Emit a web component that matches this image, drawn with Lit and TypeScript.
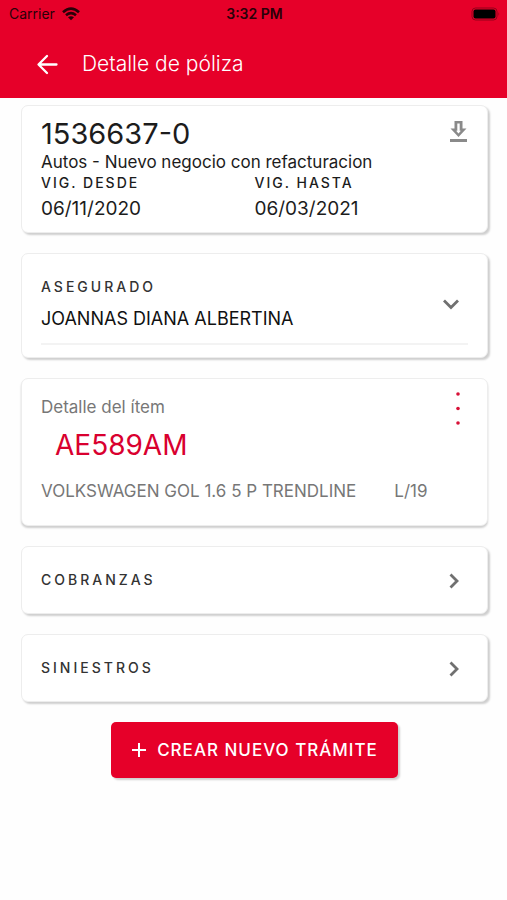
import { LitElement, html, css, svg } from "lit";
import { customElement } from "lit/decorators.js";

const chevronDown = svg`<path d="M3 6.500l7 7 7-7" fill="none" stroke="currentColor" stroke-width="2.800"/>`;
const chevronRight = svg`<path d="M6.500 4.500l6.500 6.500-6.500 6.500" fill="none" stroke="currentColor" stroke-width="2.800"/>`;

@customElement("app-root")
export class AppRoot extends LitElement {
  static styles = css`
    :host {
      display: block;
      min-height: 100vh;
      background: #fefefe;
      color: #1c1c1c;
      font-family: Inter, "Liberation Sans", sans-serif;
      font-size: 17px;
      line-height: 20px;
    }
    h1, h2, p, dl, dd, dt { margin: 0; font-weight: 400; }
    button {
      font: inherit;
      color: inherit;
      background: none;
      border: 0;
      padding: 0;
      cursor: pointer;
    }
    svg { display: block; }
    header { background: #e60029; padding-bottom: 18px; }
    .status {
      display: grid;
      grid-template-columns: 1fr auto 1fr;
      align-items: center;
      height: 28px;
      padding: 0 7px 0 9px;
      font-size: 14px;
      color: #2a0008;
    }
    .carrier { display: flex; align-items: center; gap: 7px; }
    .time { font-weight: 600; }
    .battery { justify-self: end; }
    .bar {
      display: flex;
      align-items: center;
      gap: 22px;
      padding: 20px 34px 0;
      color: #fff;
    }
    .bar h1 { font-size: 21px; line-height: 32px; font-weight: 300; }
    main {
      display: flex;
      flex-direction: column;
      gap: 20px;
      padding: 7px 19px 20px 21px;
    }
    .card {
      box-sizing: border-box;
      border: 1px solid #ededed;
      border-radius: 7px;
      background: #fff;
      box-shadow: 2px 2px 2px #cfcfcf;
      padding: 0 19px;
    }
    .flat { box-shadow: 0 2px 2px #cfcfcf; }
    .split { display: flex; justify-content: space-between; }
    .label {
      font-size: 14px;
      font-weight: 500;
      letter-spacing: 3px;
      color: #333;
    }
    .policy { padding-top: 10px; padding-bottom: 8px; }
    .number { font-size: 29px; line-height: 36px; }
    .icon { color: #8a8a8a; align-self: flex-end; }
    .dates { display: grid; grid-template-columns: 1fr 1fr; }
    .dates dt { font-size: 14px; font-weight: 500; line-height: 22px; letter-spacing: 2px; }
    .dates dd { font-size: 19px; line-height: 30px; }
    .insured {
      width: 100%;
      display: flex;
      justify-content: space-between;
      align-items: center;
      text-align: left;
      padding: 23px 7px 12px 0;
      border-bottom: 2px solid #f3f3f3;
    }
    .stack { display: flex; flex-direction: column; gap: 10px; }
    .name { font-size: 18px; line-height: 24px; color: #111; }
    .chevron { color: #707070; }
    .insured-card { padding-bottom: 12px; }
    .item { padding-top: 12px; padding-bottom: 24px; color: #777; }
    .item-title { padding-top: 6px; }
    .dots { color: #d81137; margin-right: 7px; }
    .plate {
      color: #d9002f;
      font-size: 28px;
      line-height: 36px;
      padding-left: 14px;
    }
    .vehicle { display: flex; gap: 38px; padding-top: 18px; }
    .row {
      width: 100%;
      display: flex;
      justify-content: space-between;
      align-items: center;
      padding: 23px 23px 23px 19px;
    }
    .create {
      align-self: center;
      display: flex;
      align-items: center;
      gap: 10px;
      padding: 18px 20px;
      border-radius: 5px;
      background: #e60029;
      color: #fff;
      letter-spacing: 1px;
      font-weight: 500;
      box-shadow: 2px 2px 2px #cfcfcf;
    }
  `;

  private row(title: string) {
    return html`<button class="card row">
      <span class="label">${title}</span>
      <svg class="chevron" width="20" height="20" aria-hidden="true">${chevronRight}</svg>
    </button>`;
  }

  render() {
    return html`
      <header>
        <div class="status">
          <span class="carrier">Carrier
            <svg width="18" height="14" viewBox="0 0 18 14" aria-hidden="true">
              <g fill="none" stroke="#2a0008" stroke-width="2.600">
                <path d="M1 5.200Q9-2 17 5.200"/><path d="M4 8.200Q9 4 14 8.200"/>
              </g>
              <path d="M6 10.300Q9 8 12 10.300L9 13.300Z" fill="#2a0008"/>
            </svg>
          </span>
          <span class="time">3:32 PM</span>
          <svg class="battery" width="29" height="14" viewBox="0 0 29 14" aria-hidden="true">
            <rect x="1" y="1" width="25" height="12" rx="3.500" fill="none" stroke="#93001a"/>
            <rect x="2.500" y="2.500" width="22" height="9" rx="2" fill="#000"/>
            <path d="M27.500 5q1.500 2 0 4z" fill="#93001a"/>
          </svg>
        </div>
        <div class="bar">
          <button aria-label="Volver">
            <svg width="26" height="26" viewBox="0 0 26 26" fill="none" stroke="#fff" stroke-width="2.300" stroke-linecap="round" stroke-linejoin="round">
              <path d="M22.500 13.500H5M13 5l-8.500 8.500L13 22"/>
            </svg>
          </button>
          <h1>Detalle de póliza</h1>
        </div>
      </header>
      <main>
        <section class="card policy">
          <div class="split">
            <h2 class="number">1536637-0</h2>
            <button class="icon" aria-label="Descargar">
              <svg width="20" height="32" viewBox="0 0 20 32">
                <path d="M6.500 1h8v7.500h4L10.500 17 2.500 8.500h4z" fill="currentColor"/>
                <path d="M9.300 3.500h2.400v7.300h1.200l-2.400 2.800-2.400-2.800h1.200z" fill="#fff"/>
                <path d="M2 20.500h17" stroke="currentColor" stroke-width="3"/>
              </svg>
            </button>
          </div>
          <p>Autos - Nuevo negocio con refacturacion</p>
          <dl class="dates">
            <div><dt>VIG. DESDE</dt><dd>06/11/2020</dd></div>
            <div><dt>VIG. HASTA</dt><dd>06/03/2021</dd></div>
          </dl>
        </section>
        <section class="card insured-card">
          <button class="insured" aria-expanded="false">
            <span class="stack">
              <span class="label">ASEGURADO</span>
              <span class="name">JOANNAS DIANA ALBERTINA</span>
            </span>
            <svg class="chevron" width="20" height="20" aria-hidden="true">${chevronDown}</svg>
          </button>
        </section>
        <section class="card flat item">
          <div class="split">
            <p class="item-title">Detalle del ítem</p>
            <button class="dots" aria-label="Opciones">
              <svg width="6" height="36" viewBox="0 0 6 36" fill="currentColor">
                <circle cx="3" cy="3" r="1.800"/><circle cx="3" cy="17.500" r="1.800"/><circle cx="3" cy="32" r="1.800"/>
              </svg>
            </button>
          </div>
          <h2 class="plate">AE589AM</h2>
          <p class="vehicle"><span>VOLKSWAGEN GOL 1.6 5 P TRENDLINE</span><span>L/19</span></p>
        </section>
        ${this.row("COBRANZAS")}
        ${this.row("SINIESTROS")}
        <button class="create">
          <svg width="16" height="16" viewBox="0 0 16 16" stroke="#fff" stroke-width="2" aria-hidden="true">
            <path d="M8 1v14M1 8h14"/>
          </svg>
          CREAR NUEVO TRÁMITE
        </button>
      </main>
    `;
  }
}
